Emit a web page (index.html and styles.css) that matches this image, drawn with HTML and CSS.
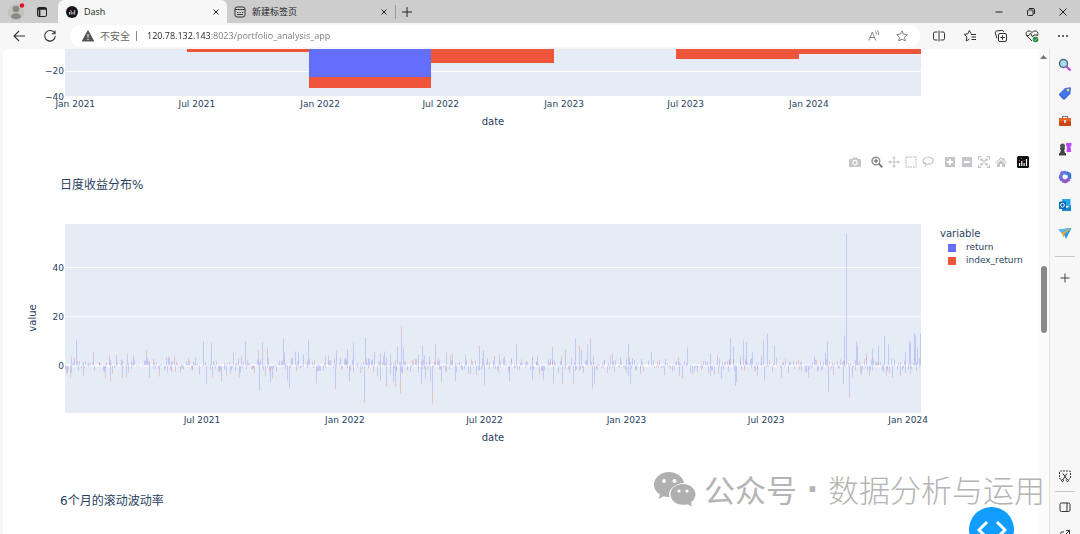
FILE: index.html
```html
<!DOCTYPE html>
<html lang="zh-CN">
<head>
<meta charset="utf-8">
<title>Dash</title>
<link rel="stylesheet" href="styles.css">
</head>
<body>
<header class="tabstrip">
  <button class="profile" aria-label="个人资料"><svg width="18" height="18" viewBox="0 0 18 18"><circle cx="9" cy="9" r="8" fill="#c3c0be"/><circle cx="9" cy="6" r="3.300" fill="#8b8885"/><path d="M4 14c0-5 10-5 10 0-2 3-8 3-10 0z" fill="#8b8885"/><circle cx="15" cy="2.500" r="2.200" fill="#e5101c"/></svg></button>
  <button class="workspace" aria-label="标签操作"><svg width="12" height="12" viewBox="0 0 12 12" fill="none" stroke="#222"><rect x="1.500" y="1.500" width="9" height="9" rx="1.500"/><path d="M1.500 2.800h9M3.500 3v7" stroke-width="1.700"/></svg></button>
  <div class="tab active">
    <svg width="12" height="12" viewBox="0 0 12 12"><circle cx="6" cy="6" r="6" fill="#15171b"/><path d="M3.500 8.500V6M5.200 8.500V5M7 8.500V6M8.700 8.500V4" stroke="#fff" stroke-width=".8"/><path d="M3.500 4.500h2" stroke="#d8365d"/></svg>
    <span>Dash</span>
    <button aria-label="关闭 Dash"><svg width="8" height="8" viewBox="0 0 8 8" stroke="#222"><path d="M1.500 1.500l5 5m0-5l-5 5"/></svg></button>
  </div>
  <div class="tab">
    <svg width="12" height="12" viewBox="0 0 12 12" fill="none" stroke="#333"><rect x="1" y="1" width="10" height="10" rx="2"/><path d="M1 3.500h10M3 6.500h1.200M5.500 6.500h1.200M8 6.500h1.200M3 8.500h6" stroke-width=".9"/></svg>
    <span>新建标签页</span>
    <button aria-label="关闭新建标签页"><svg width="8" height="8" viewBox="0 0 8 8" stroke="#222"><path d="M1.500 1.500l5 5m0-5l-5 5"/></svg></button>
  </div>
  <button class="newtab" aria-label="新建标签"><svg width="10" height="10" viewBox="0 0 10 10" stroke="#222"><path d="M5 0v10M0 5h10"/></svg></button>
  <div class="window-controls">
    <button aria-label="最小化"><svg width="10" height="10" viewBox="0 0 10 10" stroke="#222"><path d="M1.500 5h7"/></svg></button>
    <button aria-label="还原"><svg width="10" height="10" viewBox="0 0 10 10" fill="none" stroke="#222"><rect x="1.500" y="3" width="5.500" height="5.500" rx="1"/><path d="M3 1.500h4q1.500 0 1.500 1.500v4"/></svg></button>
    <button aria-label="关闭窗口"><svg width="10" height="10" viewBox="0 0 10 10" stroke="#222"><path d="M1.500 1.500l7 7m0-7l-7 7"/></svg></button>
  </div>
</header>

<nav class="toolbar">
  <button aria-label="返回"><svg width="14" height="14" viewBox="0 0 14 14" fill="none" stroke="#333" stroke-width="1.100"><path d="M13 7H2M7 2L2 7l5 5"/></svg></button>
  <button aria-label="刷新"><svg width="14" height="14" viewBox="0 0 14 14" fill="none" stroke="#333" stroke-width="1.100"><path d="M11.800 4.500A5.300 5.300 0 1 0 12.300 7M12 1.500v3.200H8.800"/></svg></button>
  <div class="address">
    <svg width="12" height="12" viewBox="0 0 12 12"><path d="M6 .8L11.700 11H.3z" fill="#555" stroke="#555" stroke-linejoin="round"/><path d="M6 4v3.500M6 8.700V10" stroke="#fff"/></svg>
    <label for="url">不安全</label>
    <span class="bar"></span>
    <input id="url" type="text" value="120.78.132.143:8023/portfolio_analysis_app">
    <button aria-label="朗读"><svg width="12" height="12" viewBox="0 0 12 12" fill="none" stroke="#777" stroke-width=".9"><path d="M.8 10.500L4.300 2l3.500 8.500M2 7.500h4.500M7.500 1.500q1.300 1.300 1 3M9.300.5q2 2 1.300 4.500"/></svg></button>
    <button aria-label="收藏此页"><svg width="12" height="12" viewBox="0 0 12 12" fill="none" stroke="#777" stroke-width=".9"><path d="M6 .8l1.600 3.300 3.700.5-2.700 2.600.7 3.700L6 9.200l-3.300 1.700.7-3.700L.7 4.600l3.700-.5z"/></svg></button>
  </div>
  <div class="tools">
    <button aria-label="分屏"><svg width="14" height="14" viewBox="0 0 14 14" fill="none" stroke="#333"><path d="M5.500 3H3Q1.500 3 1.500 4.500v5Q1.500 11 3 11h2.500M8.500 3H11q1.500 0 1.500 1.500v5Q12.500 11 11 11H8.500M7 1.500v11"/></svg></button>
    <button aria-label="收藏夹"><svg width="14" height="14" viewBox="0 0 14 14" fill="none" stroke="#333"><path d="M8.200 4.700L6.300 1.500 4.800 4.800l-3.600.5L3.900 8l-.7 4 3.100-1.800M8 5.500h5M8.500 8H13M8.500 10.500H13"/></svg></button>
    <button aria-label="集锦"><svg width="14" height="14" viewBox="0 0 14 14" fill="none" stroke="#333"><rect x="4.500" y="4.500" width="8" height="8" rx="1.500"/><path d="M3 9.500L1.300 4Q1 2.500 2.500 2L8 1.300q1.300 0 1.700 1.500M8.500 6.300v4.500M6.300 8.500h4.500"/></svg></button>
    <button aria-label="浏览器概要"><svg width="14" height="14" viewBox="0 0 14 14" fill="none" stroke="#333"><path d="M7 12L2 7C-1 3 4 0 7 3.500 10 0 15 3 12 7M1.500 6.500H4L5.500 4l2 4L9 6h3"/><circle cx="10.500" cy="10.500" r="2.800" fill="#218b3b" stroke="none"/><path d="M9 10.500l1 1 2-2" stroke="#fff" stroke-width=".7"/></svg></button>
    <button aria-label="更多"><svg width="14" height="14" viewBox="0 0 14 14" fill="#333"><circle cx="3" cy="7" r="1"/><circle cx="7" cy="7" r="1"/><circle cx="11" cy="7" r="1"/></svg></button>
  </div>
</nav>

<div class="workarea">
  <main class="page">
    <section class="chart">
      <svg class="yaxis yaxis-top"><text x="61" y="25">−20</text><text x="61" y="51">−40</text></svg>
      <svg class="plot plot-top" viewBox="0 0 856 48" preserveAspectRatio="none">
        <path d="M0 22.500h856M0 47.500h856" stroke="#fff"/>
        <path d="M122 0h122v3H122zM244 28h122v11H244zM366 0h123v14H366zM611 0h123v10H611zM734 0h122v5H734z" fill="#ef553b"/>
        <path d="M244 0h122v28H244z" fill="#636efa"/>
      </svg>
      <svg class="xaxis">
        <text x="1.200%" y="10">Jan 2021</text><text x="15.400%" y="10">Jul 2021</text><text x="29.800%" y="10">Jan 2022</text><text x="43.900%" y="10">Jul 2022</text><text x="58.300%" y="10">Jan 2023</text><text x="72.500%" y="10">Jul 2023</text><text x="86.900%" y="10">Jan 2024</text>
      </svg>
      <p class="xtitle">date</p>
    </section>

    <div class="modebar">
      <div><button aria-label="Download plot"><svg viewBox="0 0 12 12"><path fill-rule="evenodd" d="M1 3h2l1-1.500h4L9 3h2q1 0 1 1v6q0 1-1 1H1q-1 0-1-1V4q0-1 1-1zm5 .8a2.800 2.800 0 1 0 .01 0zM6 5a1.600 1.600 0 1 1-.01 0z"/></svg></button></div>
      <div>
        <button class="on" aria-label="Zoom"><svg viewBox="0 0 12 12"><path fill-rule="evenodd" d="M5 .5a4.500 4.500 0 0 1 3.800 6.800L12 10.500 10.500 12 7.300 8.800A4.500 4.500 0 1 1 5 .5zm0 1.200a3.300 3.300 0 1 0 .01 0z"/><path d="M4.300 2.800h1.400v1.500h1.500v1.400H5.700v1.500H4.300V5.700H2.800V4.300h1.500z"/></svg></button>
        <button aria-label="Pan"><svg viewBox="0 0 12 12"><path d="M6 0l2 2.500H6.500v3h3V4L12 6 9.500 8V6.500h-3v3H8L6 12 4 9.500h1.500v-3h-3V8L0 6l2.500-2v1.500h3v-3H4z"/></svg></button>
        <button aria-label="Box Select"><svg viewBox="0 0 12 12"><path fill="none" stroke="currentColor" stroke-width="1.400" stroke-dasharray="1.400 1" d="M1 1h10v10H1z"/></svg></button>
        <button aria-label="Lasso Select"><svg viewBox="0 0 12 12"><path fill="none" stroke="currentColor" stroke-width="1.200" d="M3 8C-1 5 2 1 6 1s7 3 4 6c-2 2-5 1-7 1s-1-2 0-1 1 3 0 4"/></svg></button>
      </div>
      <div>
        <button aria-label="Zoom in"><svg viewBox="0 0 12 12"><path fill-rule="evenodd" d="M1 1h10v10H1zm4 2v2H3v2h2v2h2V7h2V5H7V3z"/></svg></button>
        <button aria-label="Zoom out"><svg viewBox="0 0 12 12"><path fill-rule="evenodd" d="M1 1h10v10H1zm2 4v2h6V5z"/></svg></button>
        <button aria-label="Autoscale"><svg viewBox="0 0 12 12"><path fill="none" stroke="currentColor" stroke-width="1.200" d="M.6 3.500V.6h2.900M8.500.6h2.900v2.900M11.400 8.500v2.900H8.500M3.500 11.400H.6V8.500M3 3l6 6m0-6L3 9M3 5V3h2M7 3h2v2M9 7v2H7M5 9H3V7"/></svg></button>
        <button aria-label="Reset axes"><svg viewBox="0 0 12 12"><path d="M6 1l2 2V2h1.500v2.500L12 7l-.7.700L6 2.800.7 7.700 0 7zM6 4l4 3.700V11H7V8H5v3H2V7.700z"/></svg></button>
      </div>
      <div><a href="#plotly" aria-label="Plotly"><svg viewBox="0 0 12 12"><rect width="12" height="12" rx="1.500" fill="#111"/><path d="M2.500 10V7M4.800 10V5M7.100 10V7M9.500 10V3" stroke="#fff" stroke-width="1.200"/><path d="M2 4.500h1M4 2.500h1M6.500 4.500h1" stroke="#e5476d"/></svg></a></div>
    </div>

    <h2 class="charttitle" id="daily">日度收益分布%</h2>
    <section class="chart daily" aria-labelledby="daily">
      <svg class="yaxis"><text x="61" y="47">40</text><text x="61" y="96">20</text><text x="61" y="145">0</text><text class="ytitle" transform="translate(33 94) rotate(-90)">value</text></svg>
      <svg class="plot" viewBox="0 0 856 189" preserveAspectRatio="none">
        <path d="M0 43.500h856" stroke="#fff"/><path d="M0 92.500h856" stroke="#f5f8fc"/><path d="M0 141.500h856" stroke="#fff" stroke-width="2"/>
        <path id="return-bars" fill="#636efa" fill-opacity=".28"/>
        <path id="index-bars" fill="#ef553b" fill-opacity=".27"/>
      </svg>
      <div class="legend">
        <h3>variable</h3>
        <ul><li><i class="blue"></i>return</li><li><i class="red"></i>index_return</li></ul>
      </div>
      <svg class="xaxis">
        <text x="16%" y="10">Jul 2021</text><text x="32.700%" y="10">Jan 2022</text><text x="49%" y="10">Jul 2022</text><text x="65.600%" y="10">Jan 2023</text><text x="81.900%" y="10">Jul 2023</text><text x="98.500%" y="10">Jan 2024</text>
      </svg>
      <p class="xtitle">date</p>
    </section>
    <h2 class="charttitle next">6个月的滚动波动率</h2>
  </main>
  <div class="scrollbar"><svg width="7" height="4" viewBox="0 0 7 4"><path d="M3.500 0L7 4H0z" fill="#777"/></svg><span></span></div>

  <aside class="sidebar">
    <button aria-label="搜索"><svg viewBox="0 0 14 14"><path d="M8.500 8.500l4 4" stroke="#b83df0" stroke-width="2.200"/><circle cx="5.500" cy="5.500" r="4" fill="#a8dcf5" stroke="#536b80" stroke-width="1.500"/></svg></button>
    <button aria-label="购物"><svg viewBox="0 0 14 14"><path d="M7 2l5-.7q1 0 1 1L12.500 7 7 13q-1 .7-2 0L1.500 9.500q-.8-1 0-2z" fill="#4775ee"/><path d="M1.500 8.500L5 12.500q1 1 2 0L12.500 7" fill="none" stroke="#2855c8"/><circle cx="10" cy="4" r="1.300" fill="#ffdb55"/></svg></button>
    <button aria-label="工具"><svg viewBox="0 0 14 14"><path d="M4.500 4V2.500h5V4" fill="none" stroke="#777" stroke-width="1.200"/><rect x="1" y="4" width="12" height="8" rx="1" fill="#c94416"/><path d="M1 4h12v3.500H1z" fill="#e96527"/><path d="M6 6h2v3H6z" fill="#ddd"/></svg></button>
    <button aria-label="游戏"><svg viewBox="0 0 14 14"><path d="M8 1h5.500v2.500l-1 1 .7 5.500H8.500L9 4.500l-1-1z" fill="#b94af0"/><circle cx="4.500" cy="4" r="2.500" fill="#555"/><path d="M2 6h5v1.500H6l1 3.500h1v2.500H1V11h1l1-3.500H2z" fill="#444"/></svg></button>
    <button aria-label="Microsoft 365"><svg viewBox="0 0 14 14" fill="none" stroke-width="3.500" stroke-linejoin="round"><path d="M8 2.500L4 3 2.500 7 4 10.500" stroke="#6b72de"/><path d="M8 2.500l3.500 2V9" stroke="#3778df"/><path d="M11.500 9L7.500 11.500 4 10.500" stroke="#8958cb"/></svg></button>
    <button aria-label="Outlook"><svg viewBox="0 0 14 14"><path d="M4 1h8.500v7H4z" fill="#28a8ea"/><path d="M4 7l5 3 4-3v6H4z" fill="#1687d0"/><rect x="1" y="3.500" width="7" height="7.500" rx="1" fill="#0364b8"/><circle cx="4.500" cy="7.200" r="1.900" fill="none" stroke="#fff"/></svg></button>
    <button aria-label="发送"><svg viewBox="0 0 14 14"><path d="M.5 3.500L13.500 2 8 13 6 8.500z" fill="#2998e8"/><path d="M.5 3.500L13.500 2 6 8.500 3.500 7z" fill="#55b9ed"/><path d="M3.500 7L13.500 2 6 8.500v3.500z" fill="#eaa33a"/></svg></button>
    <hr>
    <button class="add" aria-label="自定义"><svg viewBox="0 0 14 14" stroke="#444"><path d="M7 2.500v9M2.500 7h9"/></svg></button>
    <button class="snip" aria-label="屏幕截图"><svg viewBox="0 0 14 14" fill="none" stroke="#333"><path d="M3 10H2q-.5 0-.5-1V3q0-1 1-1h9q1 0 1 1v6q0 1-1 1H11" stroke-dasharray="2 1"/><path d="M5 4.500l4 6M9 4.500l-4 6"/><circle cx="4.500" cy="11.500" r="1"/><circle cx="9.500" cy="11.500" r="1"/></svg></button>
    <hr class="low">
    <button aria-label="隐藏边栏"><svg viewBox="0 0 14 14" fill="none" stroke="#333"><rect x="2" y="3" width="10" height="8.500" rx="1.500"/><path d="M9 3v8.500"/></svg></button>
    <button aria-label="外部打开"><svg viewBox="0 0 14 14" fill="none" stroke="#333"><path d="M6 4H4Q2.500 4 2.500 5.500V11H10V8M7 7l4.500-4.500M8 2.500h3.500V6"/></svg></button>
  </aside>
</div>

<button class="devtools" aria-label="Dash 调试菜单"><svg width="30" height="18" viewBox="0 0 30 18" fill="none" stroke="#fff" stroke-width="3"><path d="M10 1L2 9l8 8M20 1l8 8-8 8"/></svg></button>
<div class="watermark">
  <svg width="42" height="35" viewBox="0 0 42 35"><path fill="#b0b0b0" d="M15 0c8 0 14 5 15 11-8 0-15 5-15 12l.5 2q-3 .3-6-.7L4.500 27 6 22.500C2 20 0 16.500 0 13 0 6 6.500 0 15 0z"/><path fill="#b0b0b0" d="M29 12c7 0 12.500 5 12.500 10.500 0 3-2 6-4.500 8l1 4-4.500-2.200C24 34.500 16.500 29.500 16.500 22.500S22 12 29 12z"/><g fill="#fff"><circle cx="10" cy="9" r="2"/><circle cx="20.500" cy="9" r="2"/><circle cx="25" cy="19" r="1.600"/><circle cx="33" cy="19" r="1.600"/></g></svg>
  <span class="kind">公众号</span><span class="dot">·</span><span>数据分析与运用</span>
</div>
<script src="chart.js"></script>
</body>
</html>
```
FILE: styles.css
```css
* { box-sizing: border-box; }
body {
  margin: 0;
  height: 100vh;
  display: flex;
  flex-direction: column;
  overflow: hidden;
  position: relative;
  background: #f7f7f7;
  color: #2a3f5f;
  font-family: "DejaVu Sans", "Noto Sans CJK SC", sans-serif;
}
button { border: 0; padding: 0; background: none; color: inherit; display: grid; place-items: center; }
svg { display: block; flex: none; }
h2, h3, p, ul { margin: 0; padding: 0; font-weight: 400; }

.tabstrip {
  height: 23px;
  flex: none;
  display: flex;
  align-items: center;
  background: #cdcdcd;
  color: #222;
  font: 9px/12px "Open Sans", "Noto Sans CJK SC", sans-serif;
}
.profile { margin-left: 7px; }
.workspace { margin: 0 10px 0 11px; }
.tab { width: 168px; height: 23px; padding: 0 7px; display: flex; align-items: center; gap: 6px; }
.tab span { flex: 1; }
.tab.active { width: 169px; padding-left: 8px; border-radius: 6px 6px 0 0; background: #f7f7f7; }
.newtab { margin-left: 0; padding-left: 6px; border-left: 1px solid #999; height: 14px; }
.window-controls { margin-left: auto; padding-right: 12px; display: flex; gap: 22px; }

.toolbar { height: 26px; flex: none; display: flex; align-items: center; gap: 17px; padding: 0 10px 0 12px; }
.address {
  flex: 1;
  height: 22px;
  margin-left: -4px;
  padding: 0 12px;
  display: flex;
  align-items: center;
  gap: 6px;
  border-radius: 11px;
  background: #fff;
  color: #666;
  font: 10px/14px "Open Sans", "Noto Sans CJK SC", sans-serif;
}
.address label { white-space: nowrap; }
.address .bar { width: 1px; height: 10px; background: #888; }
.address input {
  flex: 1;
  min-width: 0;
  padding: 0;
  margin-left: 4px;
  border: 0;
  outline: 0;
  font: 9px/14px "Open Sans", sans-serif;
  color: transparent;
  background: linear-gradient(90deg, #222 64px, #777 64px);
  background-clip: text;
}
.address button + button { margin-left: 10px; }
.tools { display: flex; gap: 17px; margin-left: -5px; }

.workarea { flex: 1; min-height: 0; display: flex; padding-left: 3px; overflow: hidden; }
.page { flex: 1; min-width: 0; overflow: hidden; background: #fff; border-radius: 6px 0 0 0; }
.chart { display: grid; grid-template-columns: 62px 1fr 117px; }
.plot { grid-column: 2; grid-row: 1; width: 100%; height: 189px; background: #e5ecf6; }
.yaxis { grid-column: 1; grid-row: 1; width: 62px; height: 189px; overflow: visible; }
.plot-top, .yaxis-top { height: 48px; }
.xaxis { grid-column: 2; width: 100%; height: 16px; overflow: visible; }
.yaxis text, .xaxis text { font-size: 9px; fill: #2a3f5f; text-anchor: end; }
.xaxis text { text-anchor: middle; }
.yaxis .ytitle { font-size: 10px; text-anchor: middle; }
.xtitle { grid-column: 2; text-align: center; font-size: 10px; line-height: 18px; }
.modebar { display: flex; justify-content: flex-end; gap: 5px; margin-top: 23px; padding-right: 7px; color: #c4c6ca; }
.modebar div { display: flex; }
.modebar button, .modebar a { width: 17px; height: 16px; display: grid; place-items: center; }
.modebar svg { width: 12px; height: 12px; fill: currentColor; }
.modebar .on { color: #7d8086; }
.charttitle { margin: 6px 0 0 57px; font-size: 12px; line-height: 18px; }
.daily { margin-top: 30px; }
.next { margin-top: 45px; }
.legend { grid-column: 3; grid-row: 1; padding: 3px 0 0 19px; }
.legend h3 { font-size: 10px; line-height: 14px; }
.legend ul { list-style: none; font-size: 9px; line-height: 13px; }
.legend li { display: flex; align-items: center; gap: 10px; padding-left: 8px; }
.legend i { width: 8px; height: 8px; }
.blue { background: #636efa; }
.red { background: #ef553b; }

.scrollbar { width: 11px; flex: none; display: flex; flex-direction: column; align-items: center; padding-top: 6px; background: #fbfbfb; border-radius: 0 6px 0 0; }
.scrollbar span { width: 6px; height: 67px; margin-top: 207px; border-radius: 3px; background: #8a8a8a; }
.sidebar { width: 31px; flex: none; padding-top: 9px; display: flex; flex-direction: column; align-items: center; gap: 14px; border-left: 1px solid #e5e5e5; background: #f7f7f7; }
.sidebar button { flex: none; }
.sidebar svg { width: 14px; height: 14px; }
.sidebar hr { width: 20px; flex: none; margin: 2px 0 0; border: 0; border-top: 1px solid #c8c8c8; }
.sidebar .snip { margin-top: auto; }
.sidebar .low { margin: -6px 0; }
.sidebar button:last-child { margin-bottom: -8px; }

.devtools { position: absolute; right: 66px; bottom: -18px; width: 45px; height: 45px; border-radius: 50%; background: #119dff; }
.watermark {
  position: absolute;
  right: 35px;
  bottom: 24px;
  display: flex;
  align-items: center;
  color: #b4b4b4;
  font: 300 31px/42px "Noto Sans CJK SC", sans-serif;
}
.watermark svg { margin-right: 8px; }
.watermark .kind { font-weight: 400; }
.watermark .dot { width: 31px; text-align: center; font-family: "DejaVu Sans", sans-serif; font-weight: 700; }
```
FILE: chart.js
```javascript
// Daily bars: [x, return length, index length]; positive lengths rise, negative ones fall.
const peaks = [
[6,6,3],[11,25,0],[28,8,6],[44,7,3],[51,8,3],[62,9,3],[68,9,2],[81,10,5],[103,8,1],[109,4,5],[130,7,1],[138,24,0],[146,20,3],[168,8,6],[180,24,0],[193,10,5],[197,23,0],[202,11,6],[218,27,0],[219,10,3],[230,14,0],[233,13,0],[238,11,0],[243,25,0],
[260,8,1],[271,13,2],[282,16,0],[288,20,3],[300,28,0],[309,11,3],[315,12,0],[319,14,0],[325,10,2],[332,19,0],[336,28,11],[338,13,5],[353,8,3],[357,16,4],[359,10,0],[364,9,0],[370,16,6],[381,10,3],[387,7,5],[400,9,2],[414,16,4],[418,15,0],[434,11,0],[451,17,5],[467,9,0],[472,10,0],[487,14,5],[500,10,6],[510,27,0],[514,13,7],[516,14,2],[522,14,7],[525,23,4],
[547,10,2],[563,22,0],[586,14,0],[622,16,2],[645,12,0],[652,8,2],[665,25,3],[668,19,0],[678,25,0],[681,23,0],[687,13,0],[698,20,5],[702,32,0],[709,20,0],[749,9,0],[760,13,0],[762,22,2],[779,30,0],[781,132,0],[791,22,2],[792,18,2],[801,12,0],[807,17,0],[813,19,0],[819,30,0],[823,21,0],[840,14,0],[844,25,0],[845,23,0],[849,32,0],[850,30,0],[852,18,0],[855,32,0],[856,18,0],
[5,-8,-4],[18,-7,-4],[40,-9,-4],[45,-10,-6],[57,-9,-3],[61,-9,-3],[84,-12,0],[94,-6,-5],[141,-19,0],[147,-9,-3],[156,-11,-5],[174,-9,-3],[194,-25,0],[205,-17,0],[207,-10,-3],[222,-15,0],[224,-22,0],[251,-16,-2],[270,-20,-4],[284,-16,0],[299,-32,-5],[312,-11,0],[315,-15,0],[321,-16,-5],[328,-15,-2],[330,-18,-3],[335,-14,-14],[356,-16,-3],[360,-12,-2],[365,-16,0],[367,-26,-12],[376,-14,-3],[390,-14,-2],[419,-18,-2],[444,-15,-1],[467,-14,0],[478,-12,-2],[488,-16,-2],[497,-17,-2],[508,-15,-3],[527,-23,0],[529,-15,-3],
[563,-10,0],[565,-18,0],[617,-10,-3],[645,-10,0],[656,-13,0],[670,-20,0],[671,-14,-3],[692,-9,-2],[699,-15,0],[716,-10,-2],[743,-9,-3],[763,-26,-1],[778,-19,0],[784,-28,-4],[787,-9,-3],[827,-12,0],[835,-9,-2]
];
let seed = 27;
const random = () => (seed = (seed * 16807) % 2147483647) / 2147483647;
const holidays = [[29, 33], [309, 313], [579, 583], [697, 699]];
for (let day = 0; day < 1095; day++) {
  const x = day * 856 / 1095;
  if (day % 7 > 4 || holidays.some(([a, b]) => x > a && x < b)) continue;
  const sign = random() < 0.5 ? -1 : 1;
  const length = Math.pow(random(), 2) * 7 + 0.5;
  const index = random() < 0.45 ? random() * 4 : 0;
  peaks.push([x, sign * length, sign * index]);
}
const zero = 141.5;
let returns = "", indexes = "";
for (const [x, blue, red] of peaks) {
  const left = Math.round(x);
  returns += `M${left} ${zero}h1v${-blue}h-1z`;
  if (red) indexes += `M${left} ${zero - blue}h1v${-red}h-1z`;
}
document.getElementById("return-bars").setAttribute("d", returns);
document.getElementById("index-bars").setAttribute("d", indexes);
```
